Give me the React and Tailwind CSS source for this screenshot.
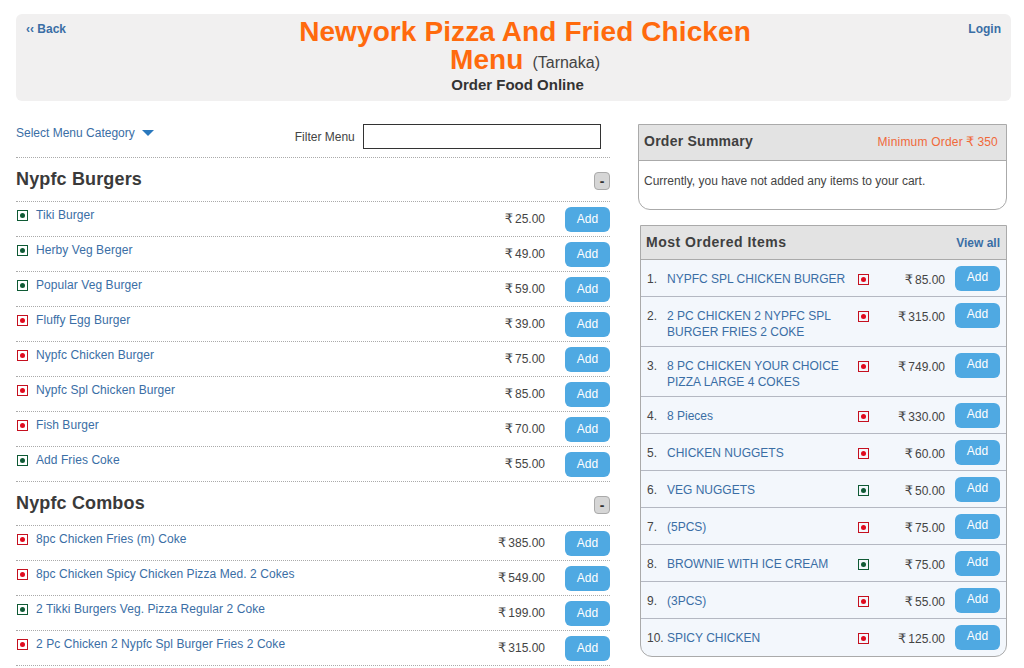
const burgers = [
  { name: 'Tiki Burger', price: '25.00', veg: true },
  { name: 'Herby Veg Berger', price: '49.00', veg: true },
  { name: 'Popular Veg Burger', price: '59.00', veg: true },
  { name: 'Fluffy Egg Burger', price: '39.00', veg: false },
  { name: 'Nypfc Chicken Burger', price: '75.00', veg: false },
  { name: 'Nypfc Spl Chicken Burger', price: '85.00', veg: false },
  { name: 'Fish Burger', price: '70.00', veg: false },
  { name: 'Add Fries Coke', price: '55.00', veg: true },
];

const combos = [
  { name: '8pc Chicken Fries (m) Coke', price: '385.00', veg: false },
  { name: '8pc Chicken Spicy Chicken Pizza Med. 2 Cokes', price: '549.00', veg: false },
  { name: '2 Tikki Burgers Veg. Pizza Regular 2 Coke', price: '199.00', veg: true },
  { name: '2 Pc Chicken 2 Nypfc Spl Burger Fries 2 Coke', price: '315.00', veg: false },
];

const mostOrdered = [
  { name: 'NYPFC SPL CHICKEN BURGER', price: '85.00', veg: false },
  { name: '2 PC CHICKEN 2 NYPFC SPL BURGER FRIES 2 COKE', price: '315.00', veg: false },
  { name: '8 PC CHICKEN YOUR CHOICE PIZZA LARGE 4 COKES', price: '749.00', veg: false },
  { name: '8 Pieces', price: '330.00', veg: false },
  { name: 'CHICKEN NUGGETS', price: '60.00', veg: false },
  { name: 'VEG NUGGETS', price: '50.00', veg: true },
  { name: '(5PCS)', price: '75.00', veg: false },
  { name: 'BROWNIE WITH ICE CREAM', price: '75.00', veg: true },
  { name: '(3PCS)', price: '55.00', veg: false },
  { name: 'SPICY CHICKEN', price: '125.00', veg: false },
];

function FoodMark({ veg }) {
  return (
    <span className={`flex h-[11px] w-[11px] shrink-0 items-center justify-center border ${veg ? 'border-[#0f5a35]' : 'border-[#c5101f]'}`}>
      <span className={`h-[5px] w-[5px] rounded-full ${veg ? 'bg-[#0f5a35]' : 'bg-[#e00a1e]'}`} />
    </span>
  );
}

function Price({ value }) {
  return (
    <span className="flex items-center text-[12px] leading-[14px] text-[#444]">
      <span className="mr-[2px] font-['DejaVu_Sans'] text-[13px]">₹</span>
      {value}
    </span>
  );
}

function AddButton({ raised }) {
  return (
    <button className={`h-[25px] w-[45px] shrink-0 rounded-[6px] bg-[#4fa9e2] text-[12px] text-white ${raised ? 'pb-[3px]' : 'pb-[1px]'}`}>
      Add
    </button>
  );
}

function MenuSection({ title, items }) {
  return (
    <div>
      <div className="flex h-[44px] items-center justify-between border-b border-dotted border-[#aaa]">
        <h2 className="text-[18px] font-bold tracking-[0.15px] text-[#3a3a3a]">{title}</h2>
        <span className="mt-[3px] flex h-[18px] w-[16px] items-center justify-center rounded-[4px] border border-[#aaa] bg-[#d6d6d6] text-[14px] font-bold leading-none text-[#333]">
          -
        </span>
      </div>
      {items.map((item) => (
        <div key={item.name} className="flex h-[35px] items-start border-b border-dotted border-[#aaa]">
          <span className="ml-[1px] mt-[8px]"><FoodMark veg={item.veg} /></span>
          <a className="ml-[8px] mt-[6px] text-[12px] leading-[14px] tracking-[0.07px] text-[#3a6ea5]">{item.name}</a>
          <span className="ml-auto mt-[10px]"><Price value={item.price} /></span>
          <span className="ml-[20px] mt-[5px] flex"><AddButton /></span>
        </div>
      ))}
    </div>
  );
}

export default function App() {
  return (
    <div className="h-[668px] overflow-hidden bg-white font-['Liberation_Sans',Arial,sans-serif] text-[#333]">
      <div className="px-[16px] pr-[13px] pt-[14px]">
        <header className="flex h-[87px] rounded-[6px] bg-[#f1f0f0] pl-[10px] pr-[10px]">
          <a className="mt-[8px] w-[259px] text-[12px] font-bold leading-[14px] text-[#3a6ea5]">
            ‹‹ Back
          </a>
          <div className="w-[480px] text-center">
            <h1 className="pt-[4px] text-[28px] font-bold leading-[28px] tracking-[0.1px] text-[#ff6a0d]">
              Newyork Pizza And Fried Chicken Menu{' '}
              <span className="ml-[1px] align-[1px] text-[16px] font-normal leading-none tracking-normal text-[#444]">(Tarnaka)</span>
            </h1>
            <div className="mr-[15px] mt-[2px] text-[15px] font-bold leading-[18px] text-[#333]">Order Food Online</div>
          </div>
          <a className="ml-auto mt-[8px] text-[12px] font-bold leading-[14px] text-[#3a6ea5]">Login</a>
        </header>
      </div>

      <div className="flex pl-[16px] pt-[23px]">
        <main className="w-[594px]">
          <div className="flex h-[34px] items-start border-b border-dotted border-[#aaa]">
            <a className="mt-[2px] flex items-center text-[12px] leading-[14px] text-[#3a6ea5]">
              Select Menu Category
              <span className="ml-[7px] h-0 w-0 border-x-[6px] border-t-[6px] border-x-transparent border-t-[#2a78bd]" />
            </a>
            <label className="ml-[141px] mt-[6px] text-[12px] leading-[14px] text-[#444]">Filter Menu</label>
            <input className="ml-[8px] h-[25px] w-[238px] border border-[#333] bg-white" />
          </div>
          <MenuSection title="Nypfc Burgers" items={burgers} />
          <MenuSection title="Nypfc Combos" items={combos} />
        </main>

        <aside className="ml-[28px] w-[369px]">
          <section className="h-[86px] rounded-b-[12px] border border-[#aaa]">
            <div className="flex h-[36px] items-center justify-between border-b border-[#aaa] bg-[#e3e3e3] px-[5px] pb-[2px] pr-[8px]">
              <span className="text-[14px] font-bold tracking-[0.25px] text-[#3f3f3f]">Order Summary</span>
              <span className="flex items-center text-[12px] tracking-[0.2px] text-[#f0693a]">
                Minimum Order
                <span className="mx-[3px] font-['DejaVu_Sans'] text-[13px]">₹</span>
                350
              </span>
            </div>
            <p className="ml-[5px] mt-[13px] text-[12px] leading-[14px] text-[#444]">
              Currently, you have not added any items to your cart.
            </p>
          </section>

          <section className="ml-[2px] mt-[15px] w-[367px] rounded-b-[12px] border border-[#aaa] bg-[#f3f7fc]">
            <div className="flex h-[34px] items-center justify-between border-b border-[#aaa] bg-[#e3e3e3] pl-[5px] pr-[6px]">
              <span className="text-[14px] font-bold tracking-[0.5px] text-[#3f3f3f]">Most Ordered Items</span>
              <a className="text-[12px] font-bold text-[#3a6ea5]">View all</a>
            </div>
            {mostOrdered.map((item, i) => (
              <div key={item.name} className={`flex items-start pl-[6px] pr-[6px] pt-[6px] ${i === mostOrdered.length - 1 ? '' : 'border-b border-[#b4b8c2]'} ${i === 1 || i === 2 ? 'h-[50px]' : 'h-[37px]'}`}>
                <span className="mt-[5px] w-[20px] shrink-0 text-[12px] leading-[16px] text-[#444]">{i + 1}.</span>
                <a className="mt-[5px] w-[191px] shrink-0 text-[12px] leading-[16px] text-[#3a6ea5]">{item.name}</a>
                <span className="mt-[8px]"><FoodMark veg={item.veg} /></span>
                <span className="ml-auto mt-[7px]"><Price value={item.price} /></span>
                <span className="ml-[10px] flex"><AddButton raised /></span>
              </div>
            ))}
          </section>
        </aside>
      </div>
    </div>
  );
}
